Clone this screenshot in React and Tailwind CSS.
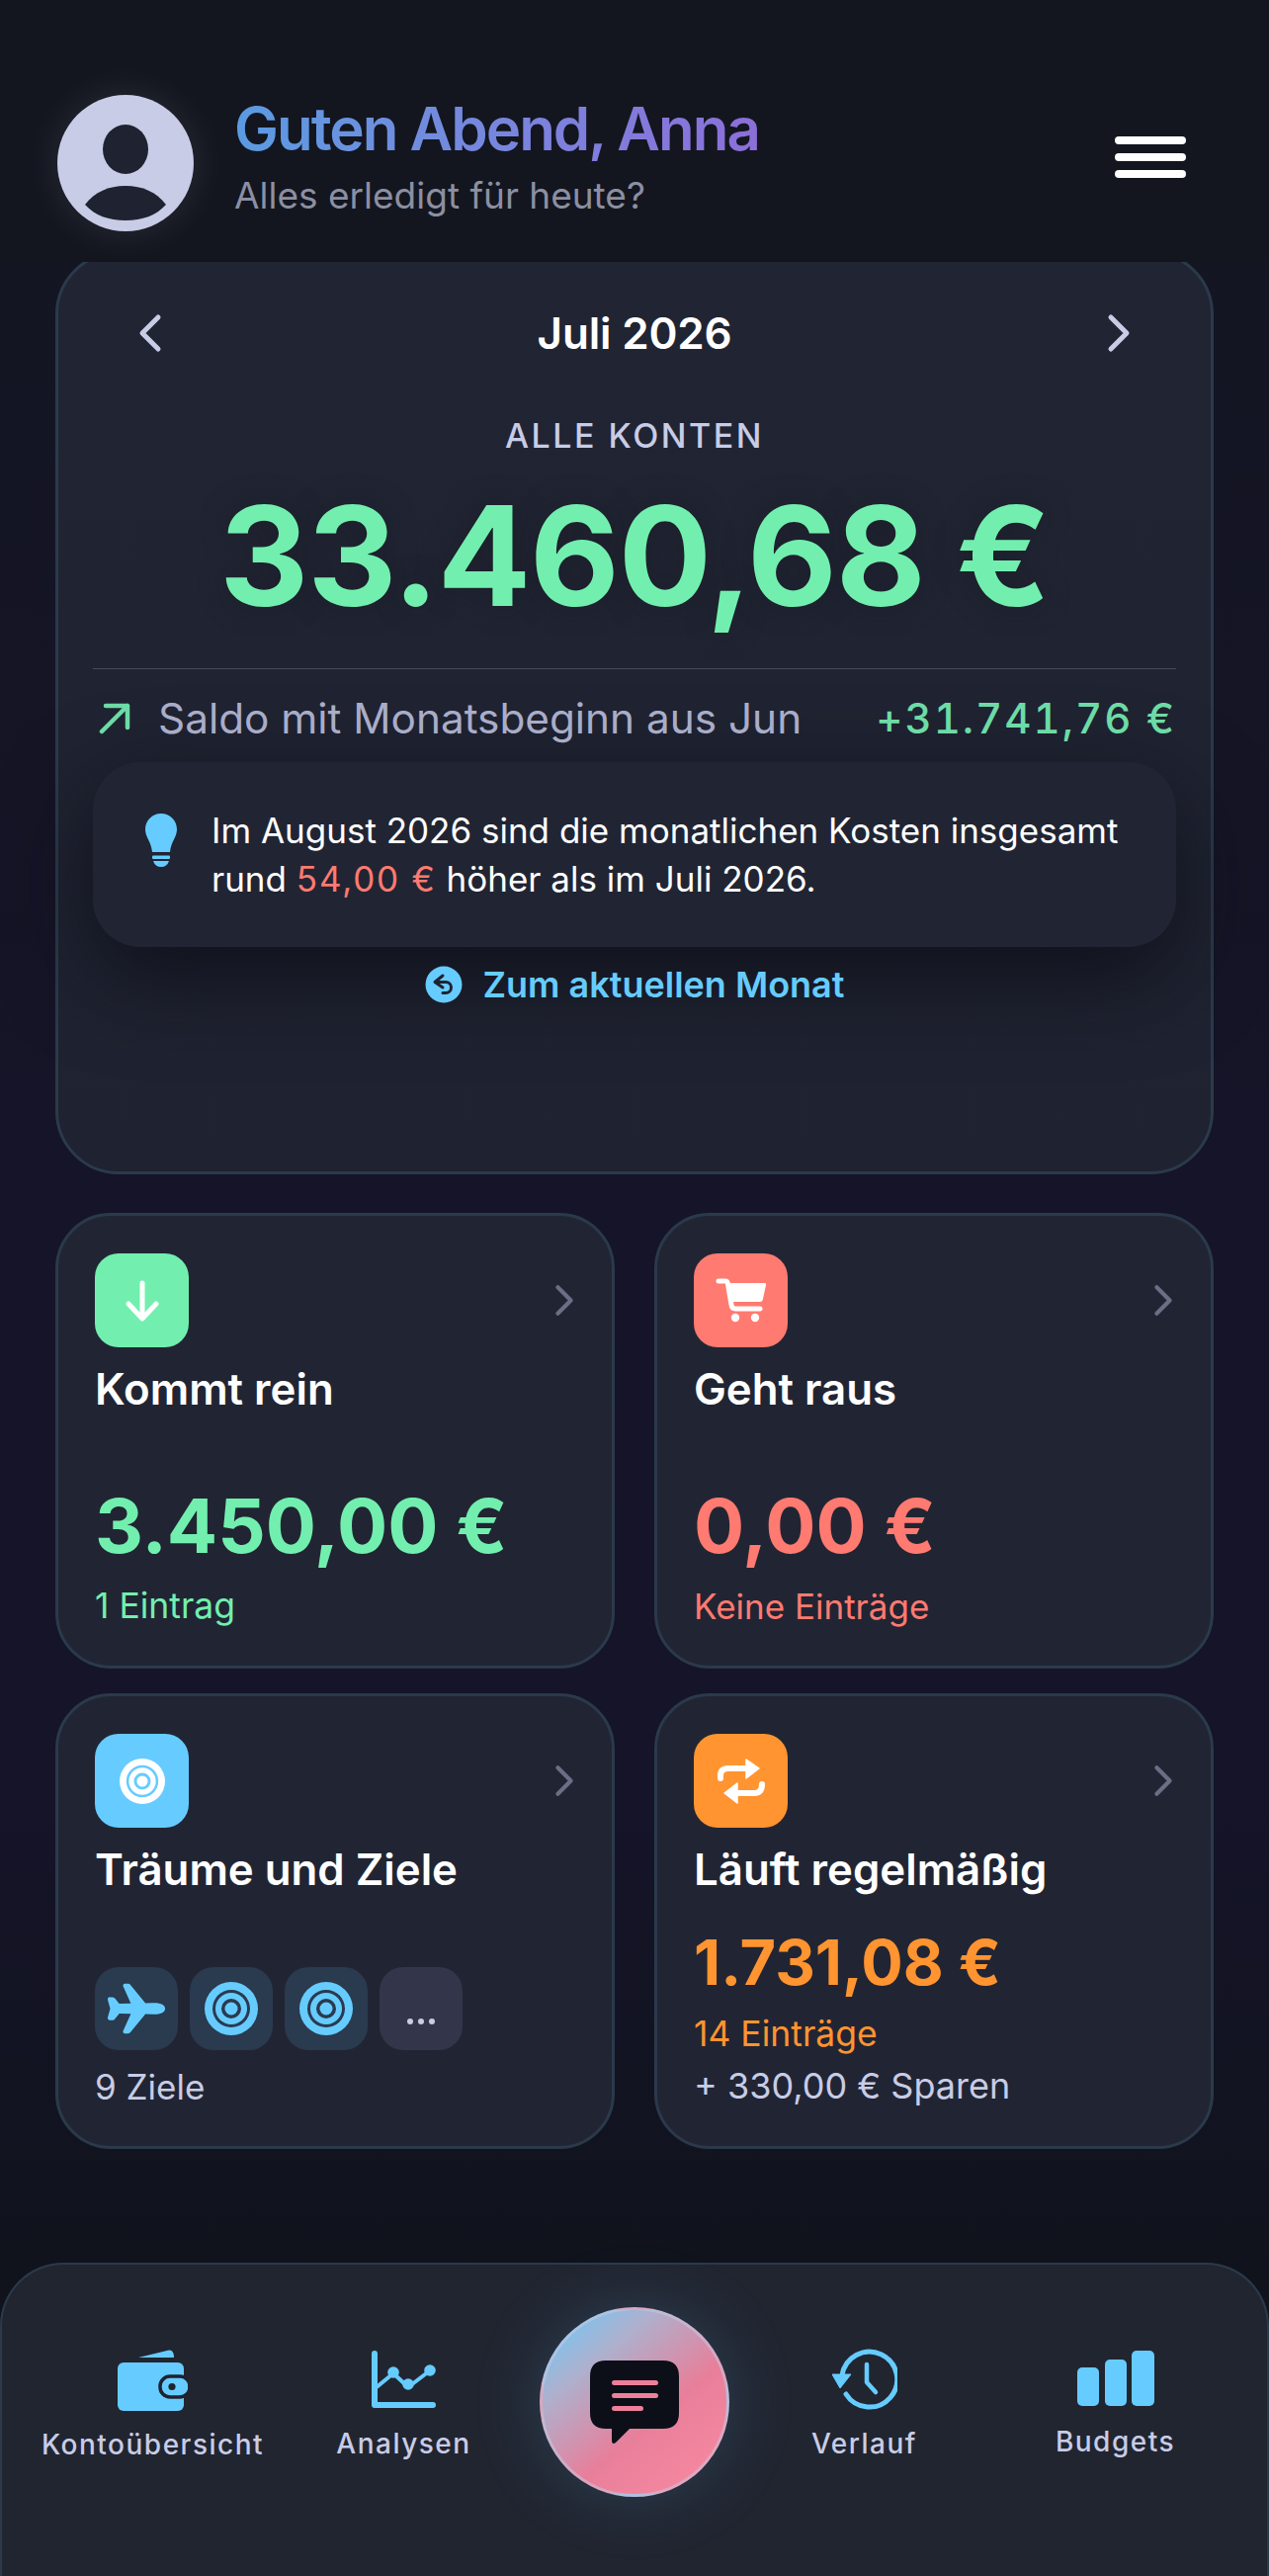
import { IoAirplane } from 'react-icons/io5';

const WHITE = '#ffffff';

function Chevron({ dir = 'right', className, color, width = 4 }) {
  return (
    <svg viewBox="0 0 24 40" fill="none" className={className}>
      <path
        d={dir === 'right' ? 'M4 4 L20 20 L4 36' : 'M20 4 L4 20 L20 36'}
        stroke={color}
        strokeWidth={width}
        strokeLinecap="round"
        strokeLinejoin="round"
      />
    </svg>
  );
}

function Avatar() {
  return (
    <svg viewBox="0 0 138 138" className="w-[138px] h-[138px] shrink-0 drop-shadow-[0_0_18px_rgba(200,204,230,0.12)]">
      <circle cx="69" cy="69" r="69" fill="#c8cce6" />
      <ellipse cx="69" cy="55" rx="23" ry="25" fill="#1f2230" />
      <path d="M28 111 C 38 98 52 92 69 92 C 86 92 100 98 110 111 C 100 122 86 127 69 127 C 52 127 38 122 28 111 Z" fill="#1f2230" />
    </svg>
  );
}

function Bulb() {
  return (
    <svg viewBox="0 0 32 54" className="w-[32px] h-[54px] shrink-0">
      <path d="M16 0 C 25 0 32 7 32 16 C 32 24 26 28 25 39 L7 39 C 6 28 0 24 0 16 C 0 7 7 0 16 0 Z" fill="#66ccff" />
      <rect x="7" y="42.5" width="18" height="3.5" rx="1" fill="#66ccff" />
      <path d="M8 48 L24 48 Q22 54 16 54 Q10 54 8 48 Z" fill="#66ccff" />
    </svg>
  );
}

function BackCircle() {
  return (
    <svg viewBox="0 0 38 38" className="w-[38px] h-[38px] shrink-0">
      <circle cx="19" cy="19" r="18.5" fill="#66ccff" />
      <path d="M18 10 L10 16.5 L18 22 M10 16.5 L21 16.5 A 5.5 5.5 0 0 1 21 27.5 L 18 27.5" fill="none" stroke="#1f2230" strokeWidth="3" strokeLinecap="round" strokeLinejoin="round" />
    </svg>
  );
}

function ArrowDown() {
  return (
    <svg viewBox="0 0 34 42" className="w-[34px] h-[42px]" fill="none">
      <path d="M17 3 L17 38 M3 24 L17 39 L31 24" stroke={WHITE} strokeWidth="5" strokeLinecap="round" strokeLinejoin="round" />
    </svg>
  );
}

function Cart() {
  return (
    <svg viewBox="0 0 52 45" className="w-[52px] h-[45px]">
      <path d="M3 3 L10 3 Q12 3 12.5 6 L16 27 Q16.5 31 20 31 L45 31" fill="none" stroke={WHITE} strokeWidth="5" strokeLinecap="round" strokeLinejoin="round" />
      <path d="M12 5 L50 5 Q51.5 5 51 7 L48 21 Q47.5 24 45 24 L15 24 Z" fill={WHITE} />
      <circle cx="20" cy="40" r="4.2" fill={WHITE} />
      <circle cx="40" cy="40" r="4.2" fill={WHITE} />
    </svg>
  );
}

function Target({ className, color, gap }) {
  return (
    <svg viewBox="0 0 54 54" className={className}>
      <circle cx="27" cy="27" r="27" fill={color} />
      <circle cx="27" cy="27" r="19" fill={gap} />
      <circle cx="27" cy="27" r="16" fill={color} />
      <circle cx="27" cy="27" r="10" fill={gap} />
      <circle cx="27" cy="27" r="6.5" fill={color} />
    </svg>
  );
}

function RepeatIcon() {
  return (
    <svg viewBox="0 0 50 48" className="w-[50px] h-[48px]" fill="none">
      <path d="M4 21 L4 18 Q4 11 12 11 L32 11" stroke={WHITE} strokeWidth="6" strokeLinecap="round" />
      <path d="M30 2 L43 11 L30 21 Z" fill={WHITE} stroke={WHITE} strokeWidth="1.5" strokeLinejoin="round" />
      <path d="M46 27 Q46 36 38 36 L20 36" stroke={WHITE} strokeWidth="6" strokeLinecap="round" />
      <path d="M21 26 L8 36 L21 46 Z" fill={WHITE} stroke={WHITE} strokeWidth="1.5" strokeLinejoin="round" />
    </svg>
  );
}

function Wallet() {
  return (
    <svg viewBox="0 0 71 62" className="w-[71px] h-[62px]">
      <path d="M21 8 L52 0.5 Q57 0 57 8 Z" fill="#66ccff" />
      <rect x="0" y="13" width="67" height="49" rx="6" fill="#66ccff" />
      <rect x="43" y="27" width="30" height="21" rx="10" fill="#66ccff" stroke="#1f2230" strokeWidth="3.5" />
      <circle cx="55" cy="37.5" r="3.6" fill="#1f2230" />
    </svg>
  );
}

function ChartIcon() {
  return (
    <svg viewBox="0 0 65 58" className="w-[65px] h-[58px]" fill="none">
      <path d="M3 3 L3 55 L62 55" stroke="#66ccff" strokeWidth="6" strokeLinecap="round" strokeLinejoin="round" />
      <path d="M5 37 L22 23 L37 37 L58 21" stroke="#66ccff" strokeWidth="4" strokeLinejoin="round" />
      <circle cx="22" cy="22" r="5.8" fill="#66ccff" />
      <circle cx="37" cy="34" r="5.8" fill="#66ccff" />
      <circle cx="59" cy="20" r="5.8" fill="#66ccff" />
    </svg>
  );
}

function HistoryIcon() {
  return (
    <svg viewBox="0 0 66 62" className="w-[66px] h-[62px]" fill="none">
      <path d="M10 27 A 28 28 0 1 1 14 46" stroke="#66ccff" strokeWidth="5" strokeLinecap="round" />
      <path d="M0 26 L19 26 L8 40 Z" fill="#66ccff" stroke="#66ccff" strokeWidth="1" strokeLinejoin="round" />
      <path d="M35 16 L35 34 L44 44" stroke="#66ccff" strokeWidth="4.5" strokeLinecap="round" strokeLinejoin="round" />
    </svg>
  );
}

function BudgetBars() {
  return (
    <svg viewBox="0 0 78 56" className="w-[78px] h-[56px]">
      <rect x="0" y="17" width="22" height="39" rx="5" fill="#66ccff" />
      <rect x="28" y="9" width="22" height="47" rx="5" fill="#66ccff" />
      <rect x="55" y="0" width="23" height="56" rx="5" fill="#66ccff" />
    </svg>
  );
}

function ChatIcon() {
  return (
    <svg viewBox="0 0 90 86" className="w-[90px] h-[86px]">
      <path d="M16 0 L74 0 Q90 0 90 16 L90 53 Q90 69 74 69 L40 69 L26 83 Q22 86 22 80 L22 69 L16 69 Q0 69 0 53 L0 16 Q0 0 16 0 Z" fill="#0c0f17" />
      <rect x="22" y="20" width="47" height="5" rx="2.5" fill="#ee7f9b" />
      <rect x="22" y="33" width="47" height="5" rx="2.5" fill="#ee7f9b" />
      <rect x="22" y="46" width="32" height="5" rx="2.5" fill="#ee7f9b" />
    </svg>
  );
}

function CategoryCard({ icon, iconBg, title, children }) {
  return (
    <div className="h-[461px] rounded-[56px] border-[3px] border-[#2a3a4b] bg-[#212533] px-[37px] pt-[38px]">
      <div className="flex items-center justify-between">
        <div className={`w-[95px] h-[95px] rounded-[24px] flex items-center justify-center ${iconBg}`}>{icon}</div>
        <Chevron className="w-[20px] h-[33px] mr-[1px]" color="#6b6e85" width={5} />
      </div>
      <div className="mt-[19px] text-[43.8px] leading-[48px] font-semibold text-white">{title}</div>
      {children}
    </div>
  );
}

function NavItem({ icon, label, className, labelClass }) {
  return (
    <div className={`flex flex-col items-center ${className}`}>
      {icon}
      <div className={`text-[28px] leading-[36px] font-medium tracking-[1.5px] text-[#c8cce6] whitespace-nowrap ${labelClass}`}>{label}</div>
    </div>
  );
}

export default function App() {
  return (
    <div className="w-full h-[2606px] overflow-hidden flex flex-col bg-[linear-gradient(180deg,#131621_0%,#161428_45%,#151429_70%,#10131c_88%)] font-['Inter','Liberation_Sans',sans-serif]">
      {/* Kopfzeile */}
      <header className="relative z-10 h-[265px] shrink-0 bg-[#13161f] pl-[58px] pr-[84px] pt-[96px] flex items-start justify-between">
        <div className="flex items-start gap-[41px]">
          <Avatar />
          <div>
            <div className="text-[60px] leading-[68px] font-semibold tracking-[-2px] bg-gradient-to-r from-[#5a9be2] to-[#8b6fd9] bg-clip-text text-transparent">Guten Abend, Anna</div>
            <div className="mt-[12px] text-[37px] leading-[44px] text-[#8c8fa3]">Alles erledigt für heute?</div>
          </div>
        </div>
        <div className="mt-[42px] flex flex-col gap-[9px]">
          <div className="w-[72px] h-[8px] rounded-full bg-white" />
          <div className="w-[72px] h-[8px] rounded-full bg-white" />
          <div className="w-[72px] h-[8px] rounded-full bg-white" />
        </div>
      </header>

      <main className="px-[56px]">
        {/* Saldo */}
        <section className="-mt-[11px] h-[934px] rounded-[64px] border-[3px] border-[#2a3a4b] bg-[#212533] bg-[linear-gradient(180deg,#212533_0%,#1f2230_100%)] px-[35px] pt-[60px]">
          <div className="flex items-center justify-between px-[46px] h-[40px]">
            <Chevron dir="left" className="w-[24px] h-[40px]" color="#c8cce6" width={5} />
            <div className="text-[44px] leading-[48px] font-semibold tracking-[-0.2px] text-white">Juli 2026</div>
            <Chevron className="w-[24px] h-[40px]" color="#c8cce6" width={5} />
          </div>
          <div className="mt-[64px] text-center text-[34px] leading-[40px] font-medium tracking-[2.5px] text-[#c8cce6]">ALLE KONTEN</div>
          <div className="mt-[31px] text-center text-[140px] leading-[140px] font-bold tracking-[-1.3px] text-[#72efae] [text-shadow:0_0_30px_rgba(20,20,30,0.35)]">33.460,68 €</div>
          <div className="mt-[44px] h-[1px] bg-[#454a5c]" />
          <div className="mt-[26px] h-[48px] flex items-center">
            <svg viewBox="0 0 32 32" className="w-[32px] h-[32px] ml-[6px]" fill="none">
              <path d="M3 29 L29 3 M7 3 L29 3 L29 25" stroke="#6ddba6" strokeWidth="4.5" strokeLinecap="round" strokeLinejoin="round" />
            </svg>
            <div className="ml-[28px] text-[42.3px] leading-[48px] text-[#a9adc9]">Saldo mit Monatsbeginn aus Jun</div>
            <div className="ml-auto text-[42px] leading-[48px] font-medium tabular-nums tracking-[2px] text-[#6ddba6] whitespace-nowrap">+31.741,76 €</div>
          </div>
          <div className="mt-[20px] h-[187px] rounded-[48px] bg-[#212533] shadow-[0_30px_90px_rgba(10,12,20,0.75)] flex items-center pl-[53px] pr-[40px]">
            <div className="self-start mt-[52px]"><Bulb /></div>
            <div className="ml-[35px] text-[35px] leading-[49px] text-white whitespace-nowrap">
              Im August 2026 sind die monatlichen Kosten insgesamt<br />
              rund <span className="text-[#ff7a70] tracking-[1.8px]">54,00 €</span> höher als im Juli 2026.
            </div>
          </div>
          <div className="mt-[18px] h-[40px] flex items-center justify-center gap-[21px]">
            <BackCircle />
            <div className="text-[36px] leading-[40px] font-semibold text-[#66ccff]">Zum aktuellen Monat</div>
          </div>
        </section>

        {/* Kategorien */}
        <div className="mt-[39px] grid grid-cols-2 gap-x-[40px] gap-y-[25px]">
          <CategoryCard icon={<ArrowDown />} iconBg="bg-[#72efae]" title="Kommt rein">
            <div className="mt-[71px] text-[76px] leading-[84px] font-bold text-[#72efae]">3.450,00 €</div>
            <div className="mt-[20px] text-[35.5px] leading-[40px] text-[#72efae]">1 Eintrag</div>
          </CategoryCard>
          <CategoryCard icon={<Cart />} iconBg="bg-[#ff7a70]" title="Geht raus">
            <div className="mt-[71px] text-[76px] leading-[84px] font-bold text-[#ff7a70]">0,00 €</div>
            <div className="mt-[20px] text-[35px] leading-[40px] text-[#ff7a70]">Keine Einträge</div>
          </CategoryCard>
          <CategoryCard icon={<Target className="w-[46px] h-[46px]" color="#ffffff" gap="#66ccff" />} iconBg="bg-[#66ccff]" title="Träume und Ziele">
            <div className="mt-[74px] flex gap-[12px]">
              <div className="w-[84px] h-[84px] rounded-[24px] bg-[#2a3a4f] flex items-center justify-center">
                <IoAirplane className="w-[62px] h-[62px] text-[#66ccff]" />
              </div>
              <div className="w-[84px] h-[84px] rounded-[24px] bg-[#2a3a4f] flex items-center justify-center">
                <Target className="w-[54px] h-[54px]" color="#66ccff" gap="#2a3a4f" />
              </div>
              <div className="w-[84px] h-[84px] rounded-[24px] bg-[#2a3a4f] flex items-center justify-center">
                <Target className="w-[54px] h-[54px]" color="#66ccff" gap="#2a3a4f" />
              </div>
              <div className="w-[84px] h-[84px] rounded-[24px] bg-[#33354a] flex items-end justify-center gap-[5px] pb-[26px]">
                <div className="w-[6px] h-[6px] rounded-full bg-[#c8cce6]" />
                <div className="w-[6px] h-[6px] rounded-full bg-[#c8cce6]" />
                <div className="w-[6px] h-[6px] rounded-full bg-[#c8cce6]" />
              </div>
            </div>
            <div className="mt-[17px] text-[35px] leading-[40px] text-[#c8cce6]">9 Ziele</div>
          </CategoryCard>
          <CategoryCard icon={<RepeatIcon />} iconBg="bg-[#ff9430]" title="Läuft regelmäßig">
            <div className="mt-[33px] text-[63px] leading-[72px] font-bold text-[#ff9430]">1.731,08 €</div>
            <div className="mt-[17px] text-[35.5px] leading-[40px] text-[#ff9430]">14 Einträge</div>
            <div className="mt-[12px] text-[36px] leading-[40px] text-[#c8cce6]">+ 330,00 € Sparen</div>
          </CategoryCard>
        </div>
      </main>

      {/* Navigation */}
      <nav className="mt-auto h-[317px] shrink-0 rounded-t-[64px] border-t-2 border-x-2 border-[#2a3a4b] bg-[#212530] flex items-start">
        <NavItem icon={<Wallet />} label="Kontoübersicht" className="w-[305px] pt-[86px]" labelClass="mt-[16px]" />
        <NavItem icon={<ChartIcon />} label="Analysen" className="w-[203px] pt-[87px]" labelClass="mt-[18px]" />
        <div className="w-[264px] pt-[43px] flex justify-center">
          <div className="w-[192px] h-[192px] rounded-full border-[3px] border-[#c8cce6]/50 bg-[linear-gradient(140deg,#66ccff_0%,#aeb0cd_28%,#e87f9a_60%,#fb8aa2_100%)] shadow-[0_0_70px_rgba(90,170,220,0.2)] flex items-center justify-center">
            <div className="mt-[2px]"><ChatIcon /></div>
          </div>
        </div>
        <NavItem icon={<HistoryIcon />} label="Verlauf" className="w-[201px] pt-[85px]" labelClass="mt-[16px]" />
        <NavItem icon={<BudgetBars />} label="Budgets" className="w-[307px] pt-[87px]" labelClass="mt-[18px]" />
      </nav>
    </div>
  );
}
